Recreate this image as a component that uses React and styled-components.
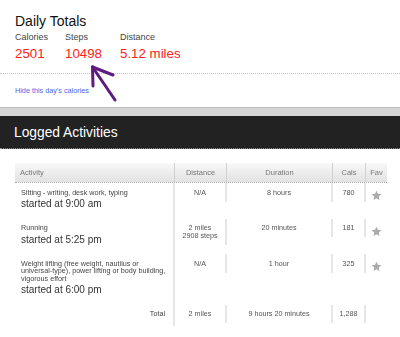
import React from 'react';
import styled, { createGlobalStyle } from 'styled-components';

const GlobalStyle = createGlobalStyle`
  html, body {
    margin: 0;
    padding: 0;
    background: #fff;
  }
  body {
    font-family: "Liberation Sans", Arial, sans-serif;
    width: 400px;
    height: 337px;
    overflow: hidden;
  }
`;

const COLS = '160px 52px 106px 33px 21px';

const Page = styled.div`
  position: relative;
  width: 400px;
`;

const Totals = styled.section`
  padding: 13px 15px 0;
`;

const Heading = styled.h1`
  margin: 0;
  font-size: 14px;
  line-height: 16px;
  font-weight: normal;
  color: #111;
`;

const Stats = styled.div`
  display: flex;
  margin-top: 3px;
`;

const Stat = styled.div`
  width: ${p => (p.$w ? `${p.$w}px` : 'auto')};
`;

const Label = styled.div`
  font-size: 9px;
  line-height: 10px;
  color: #444;
`;

const Value = styled.div`
  margin-top: 3.5px;
  font-size: 13.3px;
  line-height: 15px;
  color: #ff2020;
`;

const Divider = styled.hr`
  margin: 12.5px 0 0;
  border: 0;
  border-top: 1px dotted #c4c4c4;
`;

const HideLink = styled.a`
  display: block;
  margin: 11.5px 15px 0;
  font-size: 7.26px;
  line-height: 9px;
  color: #4d66e8;
  text-decoration: none;
`;

const SectionBar = styled.h2`
  margin: 13.5px 0 0;
  height: 32px;
  display: flex;
  align-items: center;
  padding-left: 14px;
  background: #222;
  border-top: 8px solid #d6d6d6;
  box-shadow: 0 -1px 0 #bcbcbc;
  border-bottom: 1px dotted #8a8a8a;
  color: #fff;
  font-size: 13.8px;
  font-weight: normal;
`;

const Table = styled.div`
  margin: 14px 0 0 15px;
  width: 372px;
  will-change: transform;
`;

const HeaderRow = styled.div`
  display: grid;
  grid-template-columns: ${COLS};
  height: 19px;
  background: linear-gradient(#f8f8f8, #e2e2e2);
  border-bottom: 1px dotted #a8a8a8;
`;

const HeadCell = styled.div`
  display: flex;
  align-items: center;
  justify-content: ${p => (p.$left ? 'flex-start' : 'center')};
  padding: 0 ${p => (p.$left ? '5px' : '0')};
  font-size: 7.5px;
  color: #777;
  border-right: ${p => (p.$last ? '0' : '1px solid #d0d0d0')};
`;

const Row = styled.div`
  display: grid;
  grid-template-columns: ${COLS};
`;

const ActivityCell = styled.div`
  padding: 5.5px 6px 8.5px 6px;
  border-right: 2px solid #e6e6e6;
  text-align: ${p => (p.$right ? 'right' : 'left')};
  padding-right: ${p => (p.$right ? '8px' : '6px')};
`;

const Name = styled.div`
  font-size: 7.2px;
  line-height: 7.5px;
  color: #444;
`;

const Start = styled.div`
  margin-top: 2px;
  font-size: 10px;
  line-height: 12px;
  color: #333;
`;

const Box = styled.div`
  padding: 5.5px 0;
  text-align: center;
  font-size: 7.2px;
  line-height: 7.5px;
  color: #555;
  border-right: ${p => (p.$divider ? '2px solid #e6e6e6' : '0')};
`;

const FavCell = styled.div`
  display: flex;
  justify-content: center;
  padding-top: 7px;
`;

const Arrow = styled.svg`
  position: absolute;
  top: 0;
  left: 0;
  pointer-events: none;
`;

const Star = () => (
  <svg width="11" height="11" viewBox="0 0 24 24">
    <polygon
      points="12,1.5 15.1,8.3 22.5,9.2 17,14.2 18.5,21.6 12,17.9 5.5,21.6 7,14.2 1.5,9.2 8.9,8.3"
      fill="#ababab"
    />
  </svg>
);

const activities = [
  {
    name: ['Sitting - writing, desk work, typing'],
    start: 'started at 9:00 am',
    distance: ['N/A'],
    duration: '8 hours',
    cals: '780',
  },
  {
    name: ['Running'],
    start: 'started at 5:25 pm',
    distance: ['2 miles', '2908 steps'],
    duration: '20 minutes',
    cals: '181',
  },
  {
    name: [
      'Weight lifting (free weight, nautilus or',
      'universal-type), power lifting or body building,',
      'vigorous effort',
    ],
    start: 'started at 6:00 pm',
    distance: ['N/A'],
    duration: '1 hour',
    cals: '325',
  },
];

export default function App() {
  return (
    <Page>
      <GlobalStyle />
      <Totals>
        <Heading>Daily Totals</Heading>
        <Stats>
          <Stat $w={50}>
            <Label>Calories</Label>
            <Value>2501</Value>
          </Stat>
          <Stat $w={55}>
            <Label>Steps</Label>
            <Value>10498</Value>
          </Stat>
          <Stat>
            <Label>Distance</Label>
            <Value>5.12 miles</Value>
          </Stat>
        </Stats>
      </Totals>
      <Divider />
      <HideLink href="#">Hide this day's calories</HideLink>

      <SectionBar>Logged Activities</SectionBar>

      <Table>
        <HeaderRow>
          <HeadCell $left>Activity</HeadCell>
          <HeadCell>Distance</HeadCell>
          <HeadCell>Duration</HeadCell>
          <HeadCell>Cals</HeadCell>
          <HeadCell $last>Fav</HeadCell>
        </HeaderRow>
        {activities.map(a => (
          <Row key={a.start}>
            <ActivityCell>
              <Name>
                {a.name.map(line => (
                  <div key={line}>{line}</div>
                ))}
              </Name>
              <Start>{a.start}</Start>
            </ActivityCell>
            <div>
              <Box $divider>
                {a.distance.map(line => (
                  <div key={line}>{line}</div>
                ))}
              </Box>
            </div>
            <div>
              <Box $divider>{a.duration}</Box>
            </div>
            <div>
              <Box $divider>{a.cals}</Box>
            </div>
            <FavCell>
              <Star />
            </FavCell>
          </Row>
        ))}
        <Row>
          <ActivityCell $right>
            <Name>Total</Name>
          </ActivityCell>
          <div>
            <Box $divider>2 miles</Box>
          </div>
          <div>
            <Box $divider>9 hours 20 minutes</Box>
          </div>
          <div>
            <Box $divider>1,288</Box>
          </div>
          <div />
        </Row>
      </Table>

      <Arrow width="400" height="110" viewBox="0 0 400 110">
        <g stroke="#5e1a7c" strokeWidth="3" strokeLinecap="round" fill="none">
          <line x1="115" y1="100" x2="92.5" y2="67" />
          <line x1="92.5" y1="67" x2="113" y2="75" />
          <line x1="92.5" y1="67" x2="93" y2="86" />
        </g>
      </Arrow>
    </Page>
  );
}
